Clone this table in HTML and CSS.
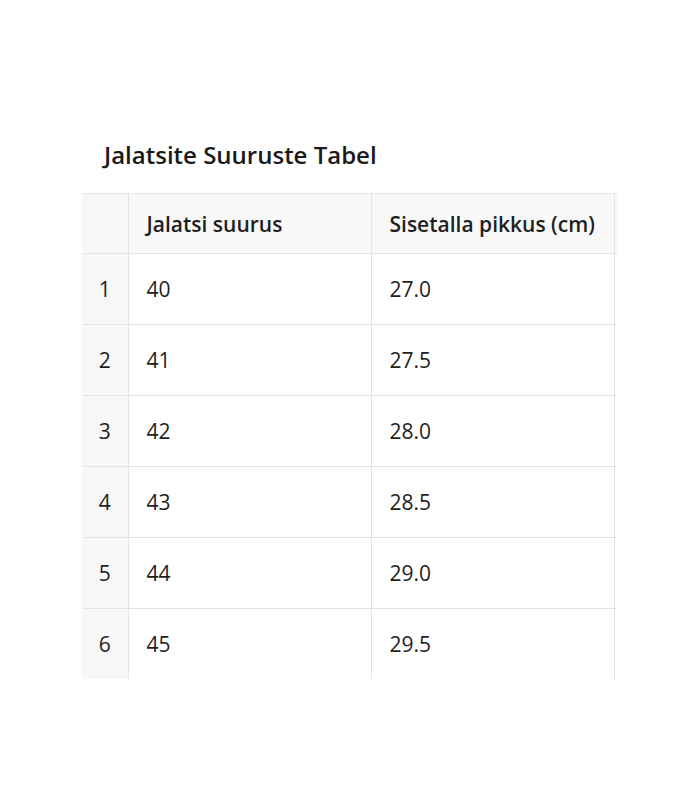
FILE: index.html
```html
<!DOCTYPE html>
<html lang="et">
<head>
<meta charset="utf-8">
<title>Jalatsite Suuruste Tabel</title>
<link rel="stylesheet" href="styles.css">
</head>
<body>
<div class="page">
  <h2 class="title">Jalatsite Suuruste Tabel</h2>
  <div class="table-wrap">
    <table class="sizes">
      <colgroup>
        <col class="c-idx">
        <col class="c-col">
        <col class="c-col">
        <col class="c-edge">
      </colgroup>
      <thead>
        <tr>
          <th class="idx"></th>
          <th>Jalatsi suurus</th>
          <th>Sisetalla pikkus (cm)</th>
          <th class="edge"></th>
        </tr>
      </thead>
      <tbody>
        <tr><td class="idx">1</td><td>40</td><td>27.0</td><td class="edge"></td></tr>
        <tr><td class="idx">2</td><td>41</td><td>27.5</td><td class="edge"></td></tr>
        <tr><td class="idx">3</td><td>42</td><td>28.0</td><td class="edge"></td></tr>
        <tr><td class="idx">4</td><td>43</td><td>28.5</td><td class="edge"></td></tr>
        <tr><td class="idx">5</td><td>44</td><td>29.0</td><td class="edge"></td></tr>
        <tr><td class="idx">6</td><td>45</td><td>29.5</td><td class="edge"></td></tr>
      </tbody>
    </table>
  </div>
</div>
</body>
</html>
```
FILE: styles.css
```css
html, body {
  margin: 0;
  padding: 0;
  background: #ffffff;
}
body {
  font-family: "Open Sans", "Noto Sans", "Liberation Sans", sans-serif;
  color: #1f1f1f;
}
.page {
  padding: 139px 0 0 82px;
}
.title {
  margin: 0 0 22px 22px;
  font-size: 24px;
  line-height: 32px;
  font-weight: 600;
  color: #1a1a1a;
}
.table-wrap {
  width: 535px;
  height: 486px;
  overflow: hidden;
}
.sizes {
  border-collapse: collapse;
  table-layout: fixed;
  width: 535px;
  font-size: 21px;
}
.c-idx { width: 46px; }
.c-col { width: 243px; }
.c-edge { width: 3px; }
.sizes th, .sizes td {
  border: 1px solid #e3e3e3;
  padding: 0 18px;
  text-align: left;
  white-space: nowrap;
}
.sizes th {
  height: 59px;
  font-weight: 600;
  background: #f8f8f8;
}
.sizes td {
  height: 70px;
}
.sizes tr > :first-child {
  border-left: none;
}
.sizes thead th {
  border-top: 1px solid #e6e6e6;
}
.sizes .idx {
  padding: 0;
  text-align: center;
  background: #f7f7f7;
}
.sizes .edge {
  padding: 0;
  border-right: none;
}
.sizes thead .edge {
  background: #f8f8f8;
}
```
